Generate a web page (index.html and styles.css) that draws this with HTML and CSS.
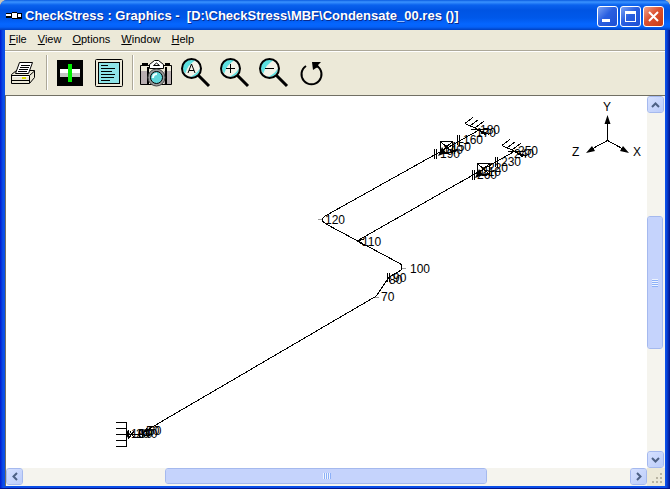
FILE: index.html
```html
<!DOCTYPE html>
<html lang="en">
<head>
<meta charset="utf-8">
<title>CheckStress : Graphics</title>
<link rel="stylesheet" href="styles.css">
</head>
<body>
<div class="window">
  <header class="titlebar">
    <svg class="app-icon" width="16" height="8" viewBox="0 0 16 8" shape-rendering="crispEdges">
      <path fill="#000" d="M0 1h6v5H0zM6 0h5v7H6zM11 1h5v6h-5z"/>
      <path fill="#fff" d="M0 2h5v2H0zM6 1h5v5H6zM12 2h3v3h-3z"/>
    </svg>
    <h1 class="title">CheckStress : Graphics -  [D:\CheckStress\MBF\Condensate_00.res ()]</h1>
    <div class="captions">
      <button class="cap" aria-label="Minimize"><svg width="19" height="19"><path fill="#fff" d="M4 12h8v3H4z"/></svg></button>
      <button class="cap" aria-label="Maximize"><svg width="19" height="19"><path fill="#fff" fill-rule="evenodd" d="M4 4h11v11H4zM5 7v7h9V7z"/></svg></button>
      <button class="cap close" aria-label="Close"><svg width="19" height="19"><path stroke="#fff" stroke-width="2" d="M5 5l9 9M14 5l-9 9"/></svg></button>
    </div>
  </header>

  <nav class="menu">
    <a href="#"><u>F</u>ile</a>
    <a href="#"><u>V</u>iew</a>
    <a href="#"><u>O</u>ptions</a>
    <a href="#"><u>W</u>indow</a>
    <a href="#"><u>H</u>elp</a>
  </nav>

  <div class="toolbar">
    <button class="tool" aria-label="Print">
      <svg width="26" height="24" viewBox="0 0 26 24">
        <path fill="#ece9d8" stroke="#000" d="M.5 13.500L5.500 9.500H23.500V16.500L18.500 22.500H.5z"/>
        <path fill="#fff" stroke="#000" d="M8.500 1.500H21.500L17.500 12.500H4.500z"/>
        <path stroke="#000" d="M10 4.500h9M9 6.500h9M8 8.500h9M7 10.500h9"/>
        <path fill="none" stroke="#000" d="M.5 14.500H18.500L23.500 10M18.500 15v7M1 19.500h17"/>
        <path stroke="#fff" d="M2 15.500h16"/>
        <path stroke="#dd0" stroke-width="2" d="M11 17h4"/>
      </svg>
    </button>
    <span class="sep"></span>
    <div class="group wide">
      <button class="tool" aria-label="Show pipe">
        <svg width="26" height="26" viewBox="0 0 26 26" shape-rendering="crispEdges">
          <path fill="#000" d="M0 0h26v26H0z"/>
          <path fill="#fff" d="M3 9h20v4H3z"/>
          <path fill="#c4c4c4" d="M3 13h20v4H3z"/>
          <path fill="#0e0" d="M11 4h4v18h-4z"/>
        </svg>
      </button>
      <button class="tool" aria-label="Report">
        <svg width="28" height="28" viewBox="0 0 28 28">
          <rect x=".5" y=".5" width="27" height="27" rx="1" fill="#ece9d8" stroke="#000"/>
          <rect x="3.500" y="3.500" width="21" height="21" fill="#8ee4e8" stroke="#000"/>
          <path stroke="#000" d="M6 6.500h7M6 9.500h14M6 12.500h11M6 15.500h14M6 18.500h13M6 21.500h9"/>
        </svg>
      </button>
    </div>
    <span class="sep"></span>
    <div class="group views">
      <button class="tool" aria-label="Snapshot">
        <svg width="32" height="28" viewBox="0 0 32 28">
          <path fill="#000" d="M2 4h6v3H2zM25 4h5v3h-5z"/>
          <path fill="#ece9d8" stroke="#000" d="M.5 6.500H31.500V25.500H.5z"/>
          <path fill="#b8aeb0" d="M1 12h8v13H1zM24 12h7v13h-7z"/>
          <path fill="#fff" stroke="#000" d="M9.500 9.500V5.500L14.500 1.500H18.500L23.500 5.500V9.500z"/>
          <path fill="none" stroke="#000" d="M13.500 6.500L16.500 4L19.500 6.500z"/>
          <path stroke="#000" stroke-width="2" d="M8 8v18M26 8v18"/>
          <circle cx="16.500" cy="18.500" r="8.500" fill="#999" stroke="#444"/>
          <circle cx="16.500" cy="18.500" r="6" fill="#5fd6da" stroke="#000"/>
          <path fill="none" stroke="#efffff" stroke-width="2" d="M13 19q0-4 4-4"/>
        </svg>
      </button>
      <button class="tool" aria-label="Zoom all">
        <svg width="30" height="30" viewBox="0 0 30 30">
          <circle cx="10.500" cy="10.500" r="9.500" fill="#f2f2e8"/>
          <path fill="#5ce0e0" d="M2 11A9 9 0 0 1 15 2Q7 6 4 16zM19 10A9 9 0 0 1 9 19Q16 16 19 10z"/>
          <circle cx="10.500" cy="10.500" r="9.500" fill="none" stroke="#000" stroke-width="2"/>
          <path fill="none" stroke="#000" d="M7 15L10.500 6L14 15M8 12.500h5"/>
          <path stroke="#000" stroke-width="3" d="M17 17l11 11"/>
        </svg>
      </button>
      <button class="tool" aria-label="Zoom in">
        <svg width="30" height="30" viewBox="0 0 30 30">
          <circle cx="10.500" cy="10.500" r="9.500" fill="#f2f2e8"/>
          <path fill="#5ce0e0" d="M2 11A9 9 0 0 1 15 2Q7 6 4 16zM19 10A9 9 0 0 1 9 19Q16 16 19 10z"/>
          <circle cx="10.500" cy="10.500" r="9.500" fill="none" stroke="#000" stroke-width="2"/>
          <path stroke="#000" d="M6 10.500h9M10.500 6v9"/>
          <path stroke="#000" stroke-width="3" d="M17 17l11 11"/>
        </svg>
      </button>
      <button class="tool" aria-label="Zoom out">
        <svg width="30" height="30" viewBox="0 0 30 30">
          <circle cx="10.500" cy="10.500" r="9.500" fill="#f2f2e8"/>
          <path fill="#5ce0e0" d="M2 11A9 9 0 0 1 15 2Q7 6 4 16zM19 10A9 9 0 0 1 9 19Q16 16 19 10z"/>
          <circle cx="10.500" cy="10.500" r="9.500" fill="none" stroke="#000" stroke-width="2"/>
          <path stroke="#000" d="M6 10.500h9"/>
          <path stroke="#000" stroke-width="3" d="M17 17l11 11"/>
        </svg>
      </button>
      <button class="tool" aria-label="Rotate">
        <svg width="30" height="26" viewBox="0 0 30 26">
          <path fill="none" stroke="#000" stroke-width="2" d="M8 6A10 10 0 1 0 19 6"/>
          <path d="M14 2h9l-3 3 1 2-3 1-3 2z"/>
        </svg>
      </button>
    </div>
  </div>

  <main class="view">
    <div class="canvas">
      <svg class="model" width="641" height="371" viewBox="6 96 641 371">
        <g class="lines">
          <path d="M480 129.500L326 215.500Q322 218 322 220Q323 222 326 224L397 262Q402 264 402 267Q402 270 398 272L390 276.500L387 280L377 295Q376 297 373 298L142 433"/>
          <path d="M357 241L516 150.500M357 241l7-2M357 241l7 4"/>
          <path d="M465 123.500l24 11M465 123.500l8-6M470 126l8-6M475 128l9-7M471 129h17M474 127l12 8"/>
          <path d="M502 145.500l24 11M502 145.500l8-6M507 148l8-6M512 150l9-7M508 151h17M511 149l12 8"/>
          <path d="M440.500 141.500h12v11h-12zM440.500 141.500l12 11M452.500 141.500l-12 11"/>
          <path d="M477.500 163.500h12v11h-12zM477.500 163.500l12 11M489.500 163.500l-12 11"/>
          <path d="M457.500 135v10M459.500 135v10M434.500 149v10M436.500 149v10M495.500 157v10M497.500 157v10M472.500 170v10M474.500 170v10M387.500 273v9M389.500 273v9"/>
          <path d="M116 422.500h10.500V446.500H116M116 428.500h10M116 434.500h10M116 440.500h10"/>
          <path d="M126 434.500h18M128.500 430v9M130 431l4 7M134 431l-5 7M139.500 430v8M142.500 430v8M146.500 428v8"/>
        </g>
        <path class="faint" d="M318 219.500h4M402 268.500h4M375 297.500h4"/>
        <path d="M438 156l4-9 4 6zM475 178l4-9 4 6zM126 429l4 5-4 5z"/>
        <g class="labels">
          <text x="325" y="224">120</text>
          <text x="362" y="246">110</text>
          <text x="410" y="273">100</text>
          <text x="381" y="301">70</text>
          <text x="389" y="284">80</text>
          <text x="393" y="282">90</text>
          <text x="480" y="134">180</text>
          <text x="476" y="137">170</text>
          <text x="463" y="144">160</text>
          <text x="451" y="151">150</text>
          <text x="443" y="154">140</text>
          <text x="440" y="158">190</text>
          <text x="518" y="155">250</text>
          <text x="514" y="158">240</text>
          <text x="501" y="166">230</text>
          <text x="488" y="172">220</text>
          <text x="481" y="176">210</text>
          <text x="477" y="179">260</text>
          <text x="148" y="435">60</text>
          <text x="146" y="435">50</text>
          <text x="144" y="438">40</text>
          <text x="139" y="438">30</text>
          <text x="136" y="438">20</text>
          <text x="131" y="438">10</text>
        </g>
      </svg>
      <svg class="axes" width="76" height="62" viewBox="570 98 76 62">
        <path class="lines" d="M607.500 120V140.500L590 150M607.500 140.500L625 150"/>
        <path d="M607.500 115l3 9h-6zM586 153l6-7 3 5zM629 153l-9-2 3-5z"/>
        <g class="labels">
          <text x="603" y="111">Y</text>
          <text x="572" y="156">Z</text>
          <text x="633" y="156">X</text>
        </g>
      </svg>
    </div>
    <div class="bar vertical">
      <button class="arrow" aria-label="Scroll up"><svg width="9" height="6"><path d="M1 5l3.500-3.500L8 5"/></svg></button>
      <span class="lead"></span>
      <div class="thumb"><i></i><i></i><i></i><i></i></div>
      <span class="trail"></span>
      <button class="arrow" aria-label="Scroll down"><svg width="9" height="6"><path d="M1 1l3.500 3.500L8 1"/></svg></button>
    </div>
    <div class="bar horizontal">
      <button class="arrow" aria-label="Scroll left"><svg width="6" height="9"><path d="M5 1L1.500 4.500L5 8"/></svg></button>
      <span class="lead"></span>
      <div class="thumb"><i></i><i></i><i></i><i></i></div>
      <span class="trail"></span>
      <button class="arrow" aria-label="Scroll right"><svg width="6" height="9"><path d="M1 1l3.500 3.500L1 8"/></svg></button>
    </div>
    <div class="grip">
      <svg width="12" height="12" fill="#b8b4a2"><path d="M9 1h2v2H9zM5 5h2v2H5zM9 5h2v2H9zM1 9h2v2H1zM5 9h2v2H5zM9 9h2v2H9z"/></svg>
    </div>
  </main>
</div>
</body>
</html>
```

FILE: styles.css
```css
* { box-sizing: border-box; }

body {
  margin: 0;
  background: #c9c6b8;
  font: 11px/14px "Liberation Sans", Arial, sans-serif;
  color: #000;
}

button { padding: 0; border: 0; background: none; }
svg { display: block; }

.window {
  display: flex;
  flex-direction: column;
  height: 100vh;
  padding: 0 5px 2px;
  background: linear-gradient(90deg, #0019cf, #0a4ee8 3px, #0a4ee8 calc(100% - 4px), #00138c);
  border-bottom: 1px solid #00138c;
  border-radius: 7px 7px 0 0;
  overflow: hidden;
}

.titlebar {
  display: flex;
  align-items: center;
  flex: none;
  height: 30px;
  gap: 3px;
  margin: 0 -5px;
  padding: 2px 6px 0 6px;
  background: linear-gradient(#0a5be0, #3a93ff 2px, #0a62ee 5px, #0054e3 10px, #0058ea 18px, #0566ff 24px, #0562f8 27px, #0040c0);
}

.title {
  flex: 1;
  margin: 0;
  overflow: hidden;
  font: bold 13px/18px "Liberation Sans", "Trebuchet MS", sans-serif;
  color: #fff;
  text-shadow: 1px 1px #0a2a8c;
  white-space: pre;
}

.captions { display: flex; gap: 2px; }

.cap {
  width: 21px;
  height: 21px;
  border: 1px solid #fff;
  border-radius: 3px;
  background: linear-gradient(135deg, #7ba2f4, #2a5fe0 45%, #1d4fd4);
}

.close { background: linear-gradient(135deg, #f0a48c, #dc5030 45%, #c63c14); }

.menu {
  display: flex;
  align-items: center;
  flex: none;
  gap: 11px;
  height: 21px;
  padding: 0 4px 2px;
  background: #ece9d8;
  border-bottom: 1px solid #aca899;
}

.menu a { color: inherit; text-decoration: none; }

.toolbar {
  display: flex;
  align-items: center;
  flex: none;
  gap: 9px;
  height: 44px;
  padding: 0 6px 2px;
  background: #ece9d8;
  border-top: 1px solid #fff;
}

.group { display: flex; align-items: center; gap: 9px; }
.wide { gap: 12px; }
.views { margin-left: -3px; }

.sep {
  width: 2px;
  height: 35px;
  border-left: 1px solid #aca899;
  border-right: 1px solid #fff;
}

.view {
  display: grid;
  flex: 1;
  min-height: 0;
  grid-template: minmax(0, 1fr) 18px / minmax(0, 1fr) 18px;
  border: 1px solid #716f64;
  border-width: 1px 0 0 1px;
  background: #ece9d8;
}

.canvas {
  position: relative;
  overflow: hidden;
  background: #fff;
}

.axes { position: absolute; top: 2px; right: 1px; }

.lines { fill: none; stroke: #000; shape-rendering: crispEdges; }
.faint { stroke: #999; }
.labels { font-size: 12px; }

.bar {
  display: flex;
  background: #f5f4ee;
}

.vertical { flex-direction: column; }
.lead { flex: 104; }
.thumb { flex: 131; }
.trail { flex: 103; }
.horizontal .lead { flex: 143; }
.horizontal .thumb { flex: 323; }
.horizontal .trail { flex: 144; }

.arrow, .thumb {
  display: flex;
  align-items: center;
  justify-content: center;
  border: 1px solid #fff;
  border-radius: 3px;
  outline: 1px solid #a5b9ee;
  outline-offset: -1px;
  background: linear-gradient(135deg, #d5e0ff, #bccdfa);
}

.arrow {
  flex: none;
  width: 17px;
  height: 17px;
}

.arrow path { fill: none; stroke: #4d6185; stroke-width: 2; }

.thumb { gap: 1px; background: #c5d3fc; }
.vertical .thumb { flex-direction: column; width: 16px; }
.horizontal .thumb { height: 16px; }
.vertical i { width: 6px; height: 1px; background: #eef4fe; box-shadow: 0 1px #8cb0f8; }
.horizontal i { width: 1px; height: 6px; background: #eef4fe; box-shadow: 1px 0 #8cb0f8; }

.grip {
  display: flex;
  align-items: flex-end;
  justify-content: flex-end;
  padding: 2px;
}
```
